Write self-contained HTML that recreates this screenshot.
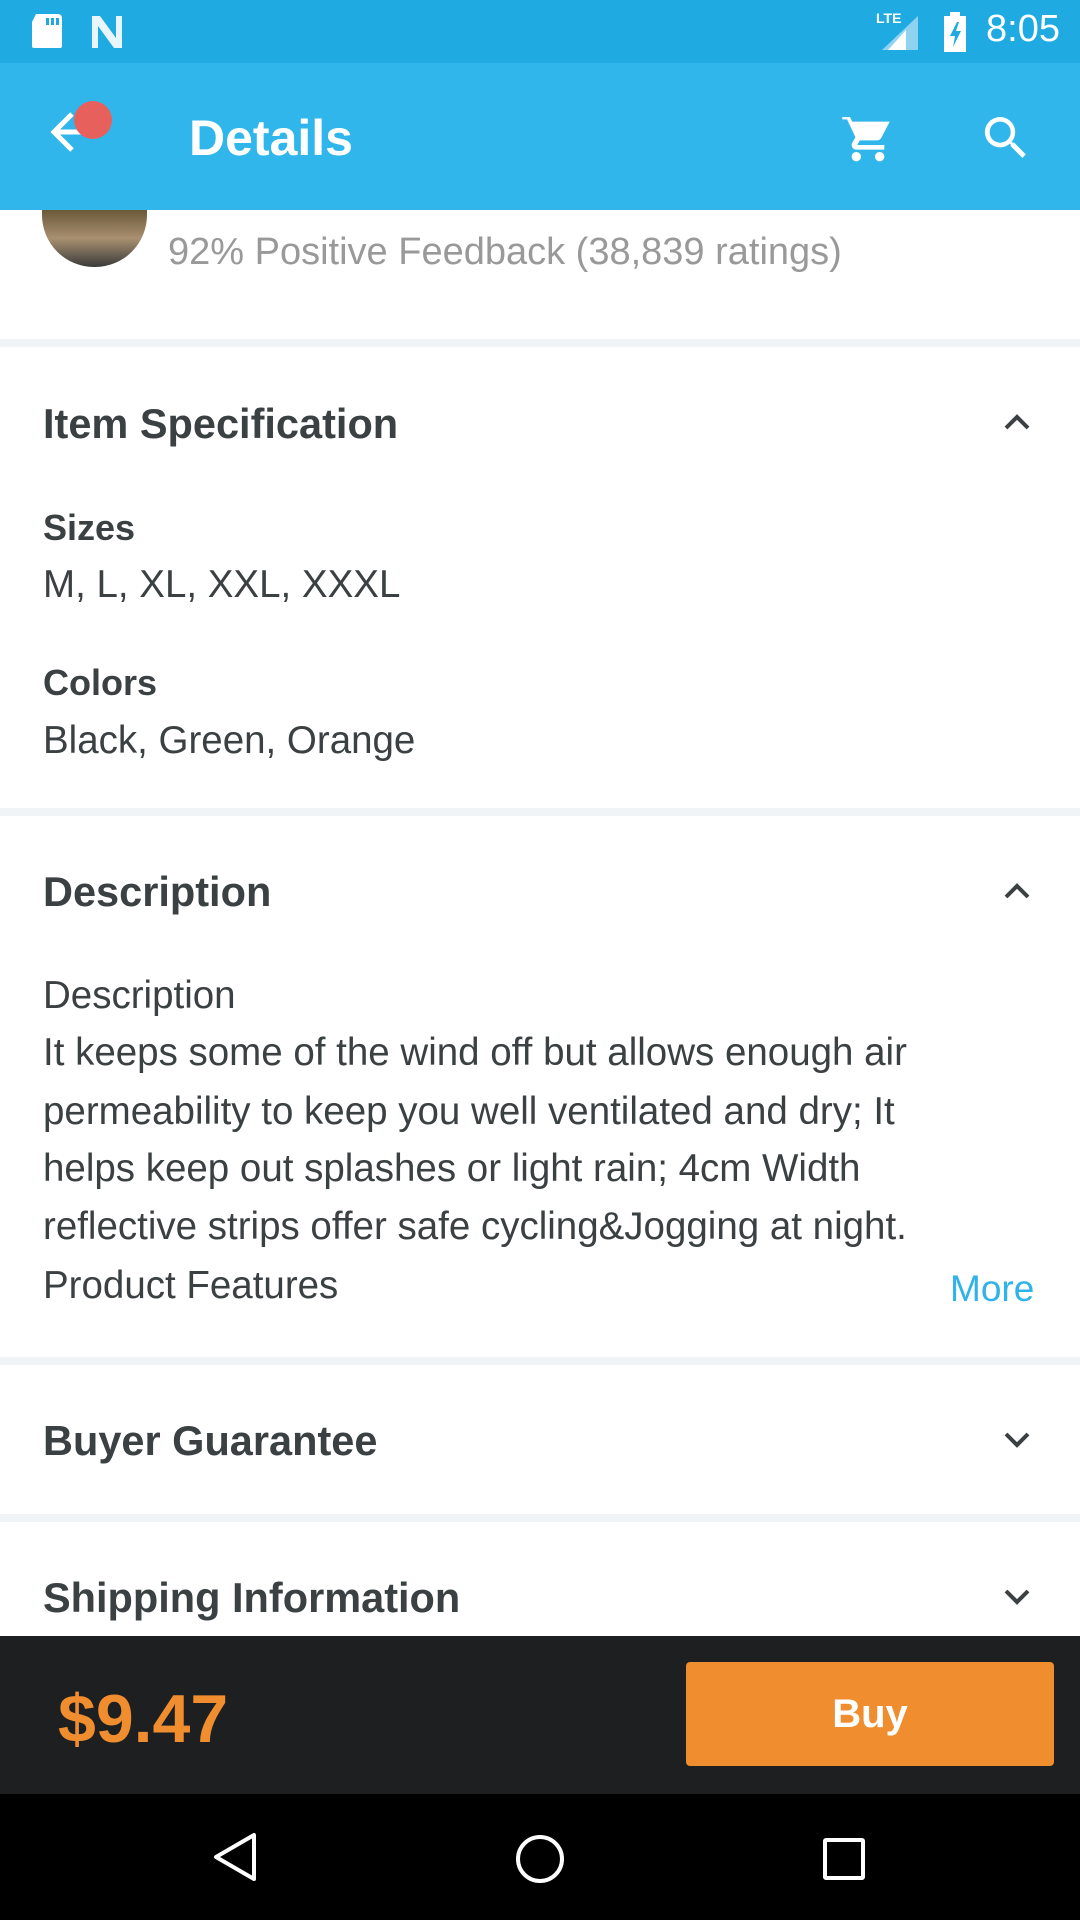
<!DOCTYPE html>
<html><head><meta charset="utf-8"><style>
*{margin:0;padding:0;box-sizing:border-box}
body{width:1080px;height:1920px;position:relative;overflow:hidden;background:#fff;font-family:"Liberation Sans",sans-serif;color:#3b4043}
.a{position:absolute;white-space:nowrap}
.h{font-weight:bold;font-size:41.5px;left:43px}
.b{font-size:38.5px;left:43px}
.sep{position:absolute;left:0;width:1080px;height:8px;background:#f1f4f6}
.chev{position:absolute;left:1003px;width:28px;height:18px}
</style></head><body>
<div class="a" style="left:0;top:0;width:1080px;height:63px;background:#1faae2"></div>
<svg class="a" style="left:30px;top:12px" width="110" height="40" viewBox="0 0 110 40">
<path d="M6 2h22a4 4 0 0 1 4 4v28a2 2 0 0 1-2 2H4a2 2 0 0 1-2-2V10z" fill="#fff"/>
<rect x="16" y="6" width="3" height="7" fill="#1faae2"/><rect x="21" y="6" width="3" height="7" fill="#1faae2"/><rect x="26" y="6" width="3" height="7" fill="#1faae2"/>
<path d="M62 4h8l16 22V4h6v32h-8L68 14v22h-6z" fill="#e8f6fc"/>
</svg>
<div class="a" style="left:876px;top:10px;color:#fff;font-size:14px;font-weight:bold">LTE</div>
<svg class="a" style="left:880px;top:14px" width="40" height="38"><path d="M38 2V36H2z" fill="#8fd3f1"/><path d="M26 16V36H8z" fill="#fff"/></svg>
<svg class="a" style="left:942px;top:10px" width="26" height="42"><rect x="2" y="6" width="22" height="36" fill="#fff"/><rect x="8" y="2" width="10" height="5" fill="#fff"/><path d="M15 12l-7 14h5l-2 11 8-16h-5l3-9z" fill="#1faae2"/></svg>
<div class="a" style="left:986px;top:8px;color:#fff;font-size:38px">8:05</div>
<div class="a" style="left:0;top:63px;width:1080px;height:147px;background:#30b6ea"></div>
<svg class="a" style="left:48px;top:110px" width="50" height="50"><path d="M24 4L6 22l18 18M6 22h34" stroke="#fff" stroke-width="5" fill="none"/></svg>
<div class="a" style="left:74px;top:101px;width:38px;height:38px;border-radius:50%;background:#e8605c"></div>
<div class="a" style="left:189px;top:109px;color:#fff;font-size:50px;font-weight:bold">Details</div>
<svg class="a" style="left:838px;top:110px" width="60" height="56" viewBox="0 0 24 24"><path fill="#fff" d="M7 18c-1.1 0-2 .9-2 2s.9 2 2 2 2-.9 2-2-.9-2-2-2zM1 2v2h2l3.6 7.6-1.350 2.4C4.5 15.4 5.5 17 7 17h12v-2H7.4l1.1-2h7.45c.75 0 1.4-.4 1.75-1.03L21.3 5H5.2l-.9-2H1zm16 16c-1.1 0-2 .9-2 2s.9 2 2 2 2-.9 2-2-.9-2-2-2z"/></svg>
<svg class="a" style="left:978px;top:110px" width="56" height="56" viewBox="0 0 24 24"><path fill="#fff" d="M15.5 14h-.8l-.3-.3A6.5 6.5 0 1 0 9.5 16a6.5 6.5 0 0 0 4.2-1.6l.3.3v.8l5 5 1.5-1.5-5-5zm-6 0C7 14 5 12 5 9.5S7 5 9.5 5 14 7 14 9.5 12 14 9.5 14z"/></svg>
<div class="a" style="left:42px;top:210px;width:105px;height:57px;border-radius:0 0 52px 52px;background:linear-gradient(#6b5a3a,#a89070 50%,#3a3a3a)"></div>
<div class="a" style="left:168px;top:231px;font-size:38px;color:#999">92% Positive Feedback (38,839 ratings)</div>
<div class="sep" style="top:339px"></div>
<div class="a h" style="top:400px">Item Specification</div>
<svg class="chev" style="top:413px"><path d="M3 15L14 4l11 11" stroke="#3b4043" stroke-width="4" fill="none"/></svg>
<div class="a h" style="top:507px;font-size:36px">Sizes</div>
<div class="a b" style="top:563px">M, L, XL, XXL, XXXL</div>
<div class="a h" style="top:662px;font-size:36px">Colors</div>
<div class="a b" style="top:719px">Black, Green, Orange</div>
<div class="sep" style="top:808px"></div>
<div class="a h" style="top:868px">Description</div>
<svg class="chev" style="top:882px"><path d="M3 15L14 4l11 11" stroke="#3b4043" stroke-width="4" fill="none"/></svg>
<div class="a b" style="top:974px">Description</div>
<div class="a b" style="top:1031px">It keeps some of the wind off but allows enough air</div>
<div class="a b" style="top:1090px">permeability to keep you well ventilated and dry; It</div>
<div class="a b" style="top:1147px">helps keep out splashes or light rain; 4cm Width</div>
<div class="a b" style="top:1205px">reflective strips offer safe cycling&amp;Jogging at night.</div>
<div class="a b" style="top:1264px">Product Features</div>
<div class="a" style="left:950px;top:1268px;font-size:37px;color:#2fb3e8">More</div>
<div class="sep" style="top:1357px"></div>
<div class="a h" style="top:1417px">Buyer Guarantee</div>
<svg class="chev" style="top:1431px"><path d="M3 3l11 11L25 3" stroke="#3b4043" stroke-width="4" fill="none"/></svg>
<div class="sep" style="top:1514px"></div>
<div class="a h" style="top:1574px">Shipping Information</div>
<svg class="chev" style="top:1588px"><path d="M3 3l11 11L25 3" stroke="#3b4043" stroke-width="4" fill="none"/></svg>
<div class="a" style="left:0;top:1636px;width:1080px;height:158px;background:#1d1f21"></div>
<div class="a" style="left:58px;top:1680px;font-size:68px;font-weight:bold;color:#ef8d2f">$9.47</div>
<div class="a" style="left:686px;top:1662px;width:368px;height:104px;background:#ef8d2f;border-radius:4px;color:#fff;font-size:40px;font-weight:bold;text-align:center;line-height:104px">Buy</div>
<div class="a" style="left:0;top:1794px;width:1080px;height:126px;background:#000"></div>
<svg class="a" style="left:210px;top:1832px" width="50" height="50"><path d="M44 3V47L6 25z" stroke="#fff" stroke-width="4" fill="none" stroke-linejoin="round"/></svg>
<div class="a" style="left:516px;top:1835px;width:48px;height:48px;border:4px solid #fff;border-radius:50%"></div>
<div class="a" style="left:823px;top:1838px;width:42px;height:42px;border:4px solid #fff;border-radius:3px"></div>
</body></html>
